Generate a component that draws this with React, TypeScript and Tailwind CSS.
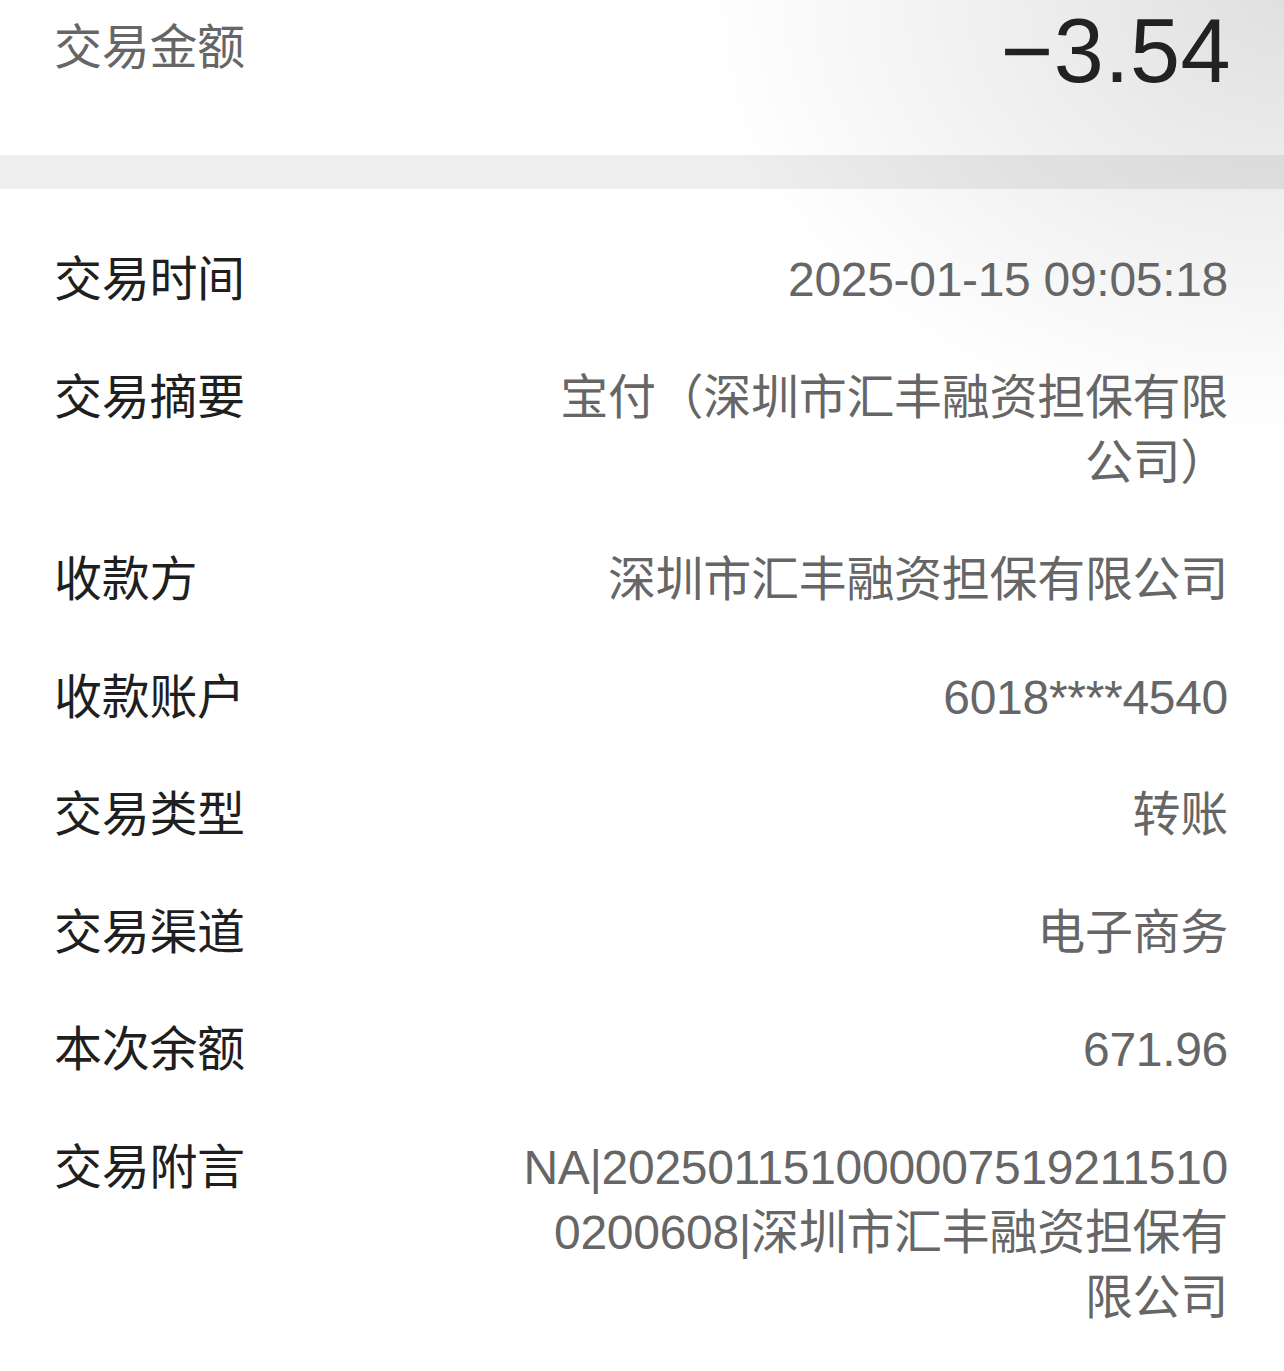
import React from 'react';

type Row = {
    label: string;
    value: string;
    wide?: boolean;
};

const rows: Row[] = [
    { label: '交易时间', value: '2025-01-15 09:05:18' },
    { label: '交易摘要', value: '宝付（深圳市汇丰融资担保有限公司）' },
    { label: '收款方', value: '深圳市汇丰融资担保有限公司' },
    { label: '收款账户', value: '6018****4540' },
    { label: '交易类型', value: '转账' },
    { label: '交易渠道', value: '电子商务' },
    { label: '本次余额', value: '671.96' },
    { label: '交易附言', value: 'NA|2025011510000075192115100200608|深圳市汇丰融资担保有限公司', wide: true },
];

const App = () => {
    return (
        <div className="min-h-screen bg-white bg-[radial-gradient(ellipse_580px_440px_at_100%_0%,#e0e0e0,#ffffff)] font-['Liberation_Sans','Noto_Sans_CJK_SC',sans-serif]">
            {/* amount header */}
            <div className="h-[155px] flex justify-between items-start pl-[54px] pr-[53px] pt-[7px]">
                <span className="mt-[8px] text-[48px] leading-[65px] tracking-[-0.3px] text-[#666666] whitespace-nowrap">交易金额</span>
                <span className="text-[90px] leading-[88px] text-[#222222] tracking-[0.5px]">−3.54</span>
            </div>

            <div className="h-[34px] bg-black/[0.065]"></div>

            {/* details */}
            <div className="pt-[32px] pl-[54px] pr-[56px]">
                {rows.map((row) => (
                    <div key={row.label} className="flex justify-between items-start gap-8 py-[26.25px]">
                        <span className="shrink-0 text-[48px] leading-[65px] tracking-[-0.3px] text-[#1f1f1f] whitespace-nowrap">
                            {row.label}
                        </span>
                        <span
                            className={
                                row.wide
                                    ? 'max-w-[716px] text-right text-[48px] leading-[65px] tracking-[-0.3px] text-[#666666] break-all'
                                    : 'max-w-[680px] text-right text-[48px] leading-[65px] tracking-[-0.3px] text-[#666666] break-all'
                            }
                        >
                            {row.value}
                        </span>
                    </div>
                ))}
            </div>
        </div>
    );
};

export default App;
